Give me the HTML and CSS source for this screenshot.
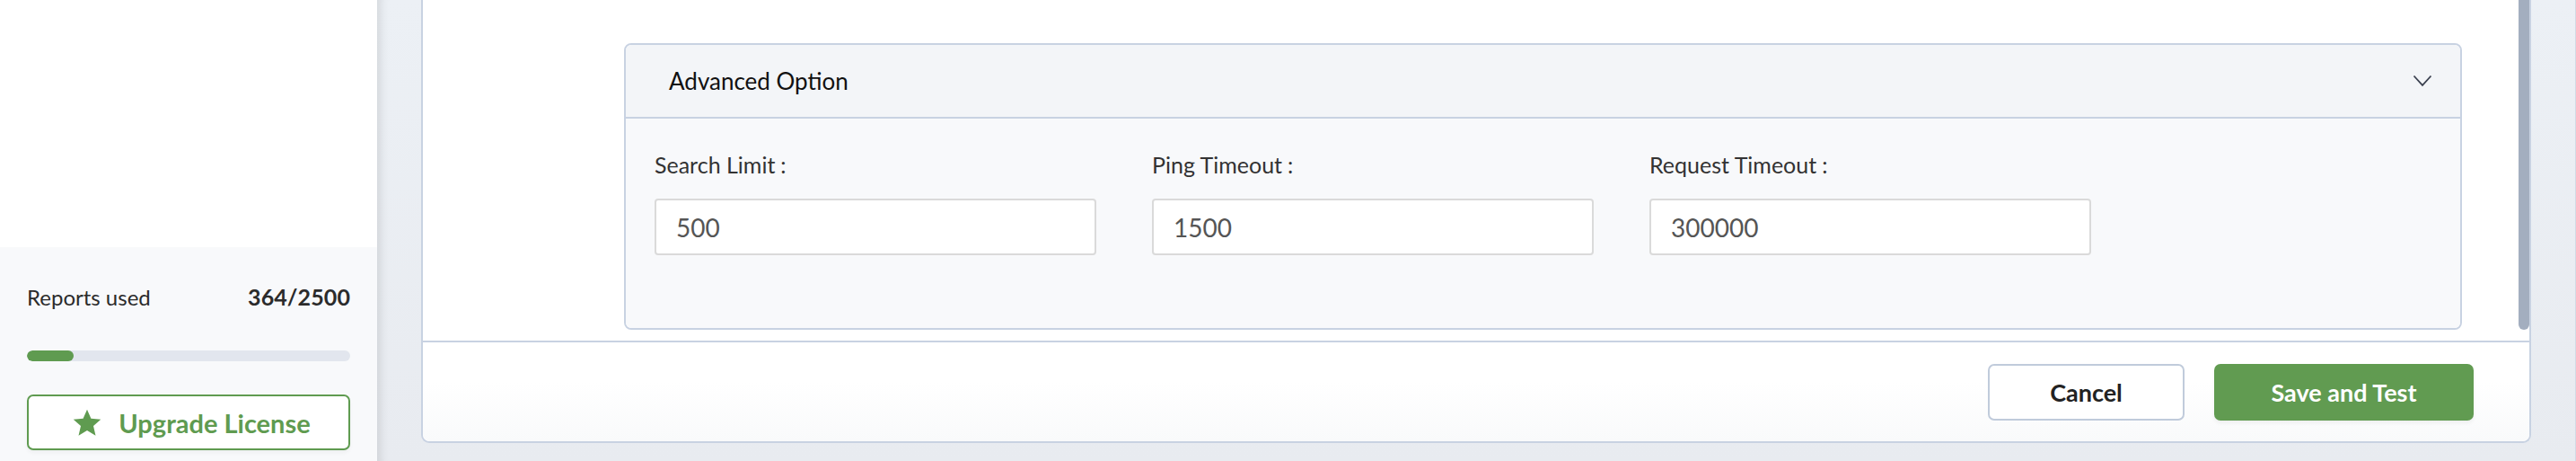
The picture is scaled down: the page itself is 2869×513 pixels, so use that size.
FILE: index.html
```html
<!DOCTYPE html>
<html>
<head>
<meta charset="utf-8">
<link rel="stylesheet" href="styles.css">
</head>
<body>
<aside class="sidebar">
  <div class="sidebar-top"></div>
  <div class="sidebar-bottom">
    <div class="usage-row">
      <span class="usage-label">Reports used</span>
      <span class="usage-value">364/2500</span>
    </div>
    <div class="progress"><div class="progress-fill" style="width:14.56%"></div></div>
    <button class="upgrade-btn">
      <svg class="star" viewBox="0 0 24 24" width="34" height="33"><path d="M12 1.2l3.2 7.3 7.9.7-6 5.3 1.8 7.8L12 18.2l-6.9 4.1 1.8-7.8-6-5.3 7.9-.7z" fill="#5f9b50"/></svg>
      <span>Upgrade License</span>
    </button>
  </div>
</aside>
<main class="main">
  <section class="card">
    <div class="card-body">
      <div class="accordion">
        <div class="accordion-header">
          <span class="accordion-title">Advanced Option</span>
          <svg class="chevron" viewBox="0 0 22 14" width="22" height="14"><path d="M1.5 1.5L11 11.8L20.5 1.5" fill="none" stroke="#3b4150" stroke-width="1.8"/></svg>
        </div>
        <div class="accordion-body">
          <div class="field">
            <label class="field-label">Search Limit<span class="colon">:</span></label>
            <input class="field-input" type="text" value="500">
          </div>
          <div class="field">
            <label class="field-label">Ping Timeout<span class="colon">:</span></label>
            <input class="field-input" type="text" value="1500">
          </div>
          <div class="field">
            <label class="field-label">Request Timeout<span class="colon">:</span></label>
            <input class="field-input" type="text" value="300000">
          </div>
        </div>
      </div>
      <div class="scroll-thumb"></div>
    </div>
    <div class="card-footer">
      <button class="btn btn-cancel">Cancel</button>
      <button class="btn btn-save">Save and Test</button>
    </div>
  </section>
</main>
</body>
</html>
```

FILE: styles.css
```css
* { box-sizing: border-box; }
html, body { margin: 0; padding: 0; }
body {
  width: 2869px;
  height: 513px;
  overflow: hidden;
  display: flex;
  font-family: "Lato", "Open Sans", sans-serif;
  color: #222;
  background: #eceff4;
}
.sidebar {
  width: 420px;
  flex: none;
  display: flex;
  flex-direction: column;
  background: #fff;
}
.sidebar-top { height: 275px; background: #fff; }
.sidebar-bottom {
  flex: 1;
  background: #f8f9fb;
  padding: 41px 30px 0 30px;
}
.usage-row {
  display: flex;
  justify-content: space-between;
  align-items: center;
  height: 28px;
  font-size: 24px;
  color: #2b2b2b;
}
.usage-value { font-weight: 700; font-size: 25px; letter-spacing: 0.1px; }
.progress {
  margin-top: 46px;
  height: 12px;
  border-radius: 6px;
  background: #e2e6ee;
  overflow: hidden;
}
.progress-fill { height: 100%; background: #5f9b50; border-radius: 6px; }
.upgrade-btn {
  margin-top: 37px;
  width: 360px;
  height: 62px;
  border: 2px solid #5f9b50;
  border-radius: 7px;
  background: #fff;
  display: flex;
  align-items: center;
  justify-content: center;
  gap: 18px;
  font-family: inherit;
  font-weight: 700;
  font-size: 29px;
  color: #5f9b50;
  padding: 0 0 0 6px;
  box-shadow: 0 3px 4px rgba(0,0,0,0.04);
}
.star { margin-left: 0; }
.main {
  flex: 1;
  display: flex;
  padding: 0 50px 0 49px;
  box-shadow: inset 12px 0 10px -8px rgba(0,0,0,0.10), inset -1px 0 0 #d3dae5;
  background: linear-gradient(180deg, #ecf0f5 0%, #e8ebf0 100%);
}
.card {
  flex: 1;
  height: 493px;
  background: #fff;
  border: 2px solid #c8d2e2;
  border-top: 0;
  border-radius: 0 0 9px 9px;
  display: flex;
  flex-direction: column;
}
.card-body {
  position: relative;
  height: 379px;
  padding: 48px 75px 0 224px;
}
.accordion {
  border: 2px solid #c8d2e2;
  border-radius: 8px;
  overflow: hidden;
}
.accordion-header {
  height: 82px;
  background: #f3f5f8;
  border-bottom: 2px solid #c8d2e2;
  display: flex;
  align-items: center;
  justify-content: space-between;
  padding: 0 31px 0 48px;
}
.accordion-title { font-size: 26px; color: #111; }
.accordion-body {
  background: #f8f9fb;
  height: 233px;
  padding: 35px 32px 0 32px;
  display: grid;
  grid-template-columns: 492px 492px 492px;
  column-gap: 62px;
  align-content: start;
}
.field { display: flex; flex-direction: column; }
.field-label {
  font-size: 25px;
  color: #333;
  height: 32px;
  line-height: 32px;
  margin-bottom: 22px;
}
.colon { margin-left: 6px; }
.field-input {
  height: 63px;
  border: 2px solid #dadada;
  border-radius: 4px;
  background: #fff;
  font-family: inherit;
  font-size: 28px;
  color: #555;
  padding: 0 22px;
  outline: none;
}
.scroll-thumb {
  position: absolute;
  right: 0;
  top: 0;
  width: 12px;
  height: 367px;
  background: #a3aebf;
  border-radius: 0 0 6px 6px;
}
.card-footer {
  flex: 1;
  border-top: 2px solid #c8d2e2;
  display: flex;
  justify-content: flex-end;
  align-items: flex-start;
  gap: 33px;
  padding: 24px 62px 0 0;
  background: linear-gradient(180deg, #fff 40%, #f9fafb 100%);
  border-radius: 0 0 8px 8px;
}
.btn {
  height: 63px;
  border-radius: 7px;
  font-family: inherit;
  font-weight: 700;
  font-size: 27px;
}
.btn-cancel {
  width: 219px;
  border: 2px solid #c0cbdb;
  background: #fff;
  color: #222;
}
.btn-save {
  width: 289px;
  border: 0;
  background: #619b51;
  color: #fff;
  box-shadow: 0 3px 4px rgba(0,0,0,0.05);
}
```
